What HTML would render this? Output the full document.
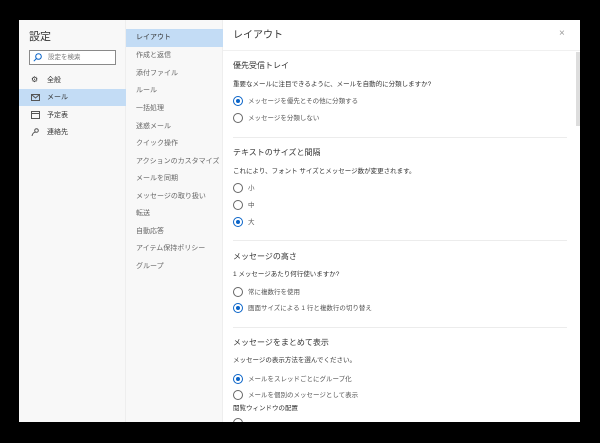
<!DOCTYPE html><html><head><meta charset="utf-8"><style>
*{margin:0;padding:0;box-sizing:border-box}
body{width:600px;height:443px;background:#000;position:relative;overflow:hidden;font-family:"Liberation Sans","Noto Sans CJK JP",sans-serif;color:#333}
.dlg{position:absolute;left:19px;top:20px;width:561px;height:402px;background:#fff;overflow:hidden}
.l{position:absolute;left:0;top:0;width:107px;height:402px;background:#f8f8f8;border-right:1px solid #eee}
.m{position:absolute;left:107px;top:0;width:97px;height:402px;background:#f8f8f8;border-right:1px solid #eee}
.r{position:absolute;left:204px;top:0;right:0;height:402px;background:#fff}
.t{position:absolute;white-space:nowrap;font-size:7px;line-height:10px}
.hl{position:absolute;background:#c3dcf5}
.rad{position:absolute;width:10px;height:10px;border:1px solid #666;border-radius:50%;background:#fff}
.rad.on{border-color:#0a64c8}
.rad.on::after{content:"";position:absolute;left:2px;top:2px;width:4px;height:4px;border-radius:50%;background:#0a64c8}
.hr{position:absolute;left:10px;width:334px;height:1px;background:#ececec}
</style></head><body>
<div class="dlg">
<div class="l">
<div class="t" style="left:10px;top:10px;font-size:11px;line-height:14px">設定</div>
<div style="position:absolute;left:10px;top:30px;width:87px;height:15px;border:1px solid #8a8a8a;background:#fff"></div>
<svg style="position:absolute;left:14px;top:33px" width="9" height="9"><circle cx="5.5" cy="3.5" r="2.8" fill="none" stroke="#0a64c8" stroke-width="1"/><line x1="3.5" y1="5.5" x2="0.8" y2="8.2" stroke="#0a64c8"/></svg>
<div class="t" style="left:29px;top:33px;color:#777;font-size:6.5px">設定を検索</div>
<div class="hl" style="left:0;top:69px;width:107px;height:17px"></div>
<div class="t" style="left:12px;top:55px;font-size:8px">⚙</div><div class="t" style="left:28px;top:56px">全般</div>
<svg style="position:absolute;left:12px;top:74px" width="9" height="7"><rect x=".5" y=".5" width="8" height="6" fill="none" stroke="#555"/><path d="M.5 .5 4.5 4 8.5 .5" fill="none" stroke="#555"/></svg><div class="t" style="left:28px;top:73px">メール</div>
<svg style="position:absolute;left:12px;top:91px" width="9" height="8"><rect x=".5" y=".5" width="8" height="7" fill="none" stroke="#555"/><line x1="0" y1="2.5" x2="9" y2="2.5" stroke="#555"/></svg><div class="t" style="left:28px;top:91px">予定表</div>
<svg style="position:absolute;left:12px;top:108px" width="9" height="8"><circle cx="5.5" cy="2.5" r="1.8" fill="none" stroke="#555"/><path d="M1 8c.5-3 2.5-4 4-4" fill="none" stroke="#555"/></svg><div class="t" style="left:28px;top:108px">連絡先</div>
</div>
<div class="m">
<div class="hl" style="left:0;top:9px;width:97px;height:18px"></div>
<div class="t" style="left:10px;top:13px;color:#333">レイアウト</div>
<div class="t" style="left:10px;top:31px;color:#666">作成と返信</div>
<div class="t" style="left:10px;top:49px;color:#666">添付ファイル</div>
<div class="t" style="left:10px;top:66px;color:#666">ルール</div>
<div class="t" style="left:10px;top:84px;color:#666">一括処理</div>
<div class="t" style="left:10px;top:102px;color:#666">迷惑メール</div>
<div class="t" style="left:10px;top:119px;color:#666">クイック操作</div>
<div class="t" style="left:10px;top:137px;color:#666">アクションのカスタマイズ</div>
<div class="t" style="left:10px;top:154px;color:#666">メールを同期</div>
<div class="t" style="left:10px;top:172px;color:#666">メッセージの取り扱い</div>
<div class="t" style="left:10px;top:189px;color:#666">転送</div>
<div class="t" style="left:10px;top:207px;color:#666">自動応答</div>
<div class="t" style="left:10px;top:224px;color:#666">アイテム保持ポリシー</div>
<div class="t" style="left:10px;top:242px;color:#666">グループ</div>
</div>
<div class="r">
<div class="t" style="left:10px;top:9px;font-size:10px;line-height:13px">レイアウト</div>
<div class="t" style="left:336px;top:9px;font-size:10px;color:#999">×</div>
<div style="position:absolute;left:0;top:30px;width:357px;height:1px;background:#f0f0f0"></div>
<div style="position:absolute;left:353px;top:32px;width:4px;height:74px;background:#ddd"></div>
<div class="t" style="left:10px;top:40px;font-size:8px;line-height:11px">優先受信トレイ</div>
<div class="t" style="left:10px;top:60px;font-size:6.5px">重要なメールに注目できるように、メールを自動的に分類しますか?</div>
<div class="rad on" style="left:10px;top:76px"></div><div class="t" style="left:25px;top:77px;color:#555;font-size:6.5px">メッセージを優先とその他に分類する</div>
<div class="rad" style="left:10px;top:93px"></div><div class="t" style="left:25px;top:94px;color:#555;font-size:6.5px">メッセージを分類しない</div>
<div class="hr" style="top:117px"></div>
<div class="t" style="left:10px;top:127px;font-size:8px;line-height:11px">テキストのサイズと間隔</div>
<div class="t" style="left:10px;top:147px;font-size:6.5px">これにより、フォント サイズとメッセージ数が変更されます。</div>
<div class="rad" style="left:10px;top:163px"></div><div class="t" style="left:25px;top:164px;color:#555;font-size:6.5px">小</div>
<div class="rad" style="left:10px;top:180px"></div><div class="t" style="left:25px;top:181px;color:#555;font-size:6.5px">中</div>
<div class="rad on" style="left:10px;top:197px"></div><div class="t" style="left:25px;top:198px;color:#555;font-size:6.5px">大</div>
<div class="hr" style="top:220px"></div>
<div class="t" style="left:10px;top:231px;font-size:8px;line-height:11px">メッセージの高さ</div>
<div class="t" style="left:10px;top:250px;font-size:6.5px">1 メッセージあたり何行使いますか?</div>
<div class="rad" style="left:10px;top:267px"></div><div class="t" style="left:25px;top:268px;color:#555;font-size:6.5px">常に複数行を使用</div>
<div class="rad on" style="left:10px;top:283px"></div><div class="t" style="left:25px;top:284px;color:#555;font-size:6.5px">画面サイズによる 1 行と複数行の切り替え</div>
<div class="hr" style="top:307px"></div>
<div class="t" style="left:10px;top:317px;font-size:8px;line-height:11px">メッセージをまとめて表示</div>
<div class="t" style="left:10px;top:336px;font-size:6.5px">メッセージの表示方法を選んでください。</div>
<div class="rad on" style="left:10px;top:354px"></div><div class="t" style="left:25px;top:355px;color:#555;font-size:6.5px">メールをスレッドごとにグループ化</div>
<div class="rad" style="left:10px;top:370px"></div><div class="t" style="left:25px;top:371px;color:#555;font-size:6.5px">メールを個別のメッセージとして表示</div>
<div class="t" style="left:10px;top:384px;font-size:6.5px">閲覧ウィンドウの配置</div>
<div class="rad" style="left:10px;top:398px"></div>
</div>
</div>
</body></html>
